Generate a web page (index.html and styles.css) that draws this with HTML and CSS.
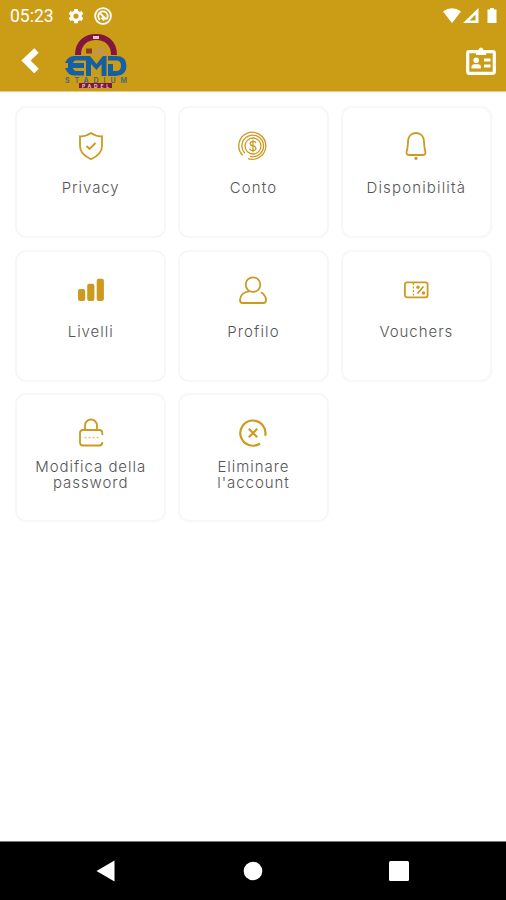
FILE: index.html
```html
<!DOCTYPE html>
<html lang="it">
<head>
    <meta charset="UTF-8">
    <meta name="viewport" content="width=device-width, initial-scale=1.0">
    <title>Impostazioni</title>
    <link rel="stylesheet" href="styles.css">
</head>
<body>

    <header>
        <div class="status-bar">
            <span class="time">05:23</span>
            <svg class="gear" width="18" height="18" viewBox="0 0 24 24"><path d="M19.4 13a7.500 7.500 0 0 0 0-2l2.300-1.700-2.200-3.900-2.700 1.100a8 8 0 0 0-1.900-1.100L14.500 2.500h-5l-.4 2.900a8 8 0 0 0-1.900 1.100L4.500 5.400 2.300 9.300 4.600 11a7.500 7.500 0 0 0 0 2l-2.300 1.700 2.200 3.900 2.700-1.100a8 8 0 0 0 1.900 1.100l.4 2.900h5l.4-2.900a8 8 0 0 0 1.900-1.100l2.700 1.100 2.200-3.900zM12 15.500a3.500 3.500 0 1 1 0-7 3.500 3.500 0 0 1 0 7z"/></svg>
            <svg class="dnd" width="18" height="18" viewBox="0 0 18 18"><circle cx="9" cy="9" r="7.900"/><path d="M6 12.700A4.700 4.700 0 1 1 12.600 12M5.800 6l6.500 6.400M7.500 10.500l2.800 2.800"/></svg>
            <svg class="signals" width="56" height="18" viewBox="0 0 56 18"><path d="M1 4.500Q10-2 19 4.500L10 16z"/><path fill-rule="evenodd" d="M36.500 1v15H21zM33.500 7.500v6h-6z"/><path d="M48 1h4v1.500h2.500V16h-9V2.500H48z"/></svg>
        </div>
        <div class="toolbar">
            <svg class="back" width="20" height="28" viewBox="0 0 20 28"><path d="M16.500 3.500L6 13.500l10.500 10.500"/></svg>
            <svg class="logo" width="64" height="56" viewBox="0 0 64 56">
                <path class="arch" d="M14 22C14 10 22 4 32 4s18 6 18 18"/>
                <path class="arch-mark" d="M29 4.500h6"/>
                <path class="ball" d="M29 18l3-4 6-1 5 4v5H29z"/>
                <path class="arch-mark-small" d="M22 18h6"/>
                <g class="letters">
                    <path d="M1 30q3-7 9-7h13v4.500H11L8.500 30H20v5H8.500l2.500 3h9v4.500H10q-6 0-9-7.500h3v-5z"/>
                    <path d="M22 43V23h4l6.500 8 6.500-8h3.500v20h-5V31l-5 6-5.500-6v12z"/>
                    <path fill-rule="evenodd" d="M44 23h8q10.500 0 10.500 9.700T52 43h-8V31h5v7h3q5 0 5-5.300t-5-5.200h-8z"/>
                </g>
                <text class="stadium" x="1" y="49.500" textLength="62">STADIUM</text>
                <rect class="padel-bg" x="15" y="50" width="33" height="5"/>
                <text class="padel" x="18" y="54.500" textLength="27">PADEL</text>
            </svg>
            <svg class="badge" width="30" height="28" viewBox="0 0 30 28">
                <rect class="frame" x="1.700" y="4.700" width="26.600" height="21.600" rx="1.500"/>
                <path d="M10 3h2.500q.5-2.500 2.500-2.500T17.500 3H20v5H10z"/>
                <circle cx="10.200" cy="13.200" r="2.800"/>
                <path d="M5.500 21.500v-2q0-2 3-2.300h3.400q3 .3 3 2.300v2zM18 11.500h6.500v3H18zM18 17.500h6.500v3H18z"/>
            </svg>
        </div>
    </header>

    <main>
        <a class="card" href="#">
            <svg class="icon" viewBox="0 0 30 30"><path d="M15 2q5 3.600 11 3.300V15c0 6.500-5 10.500-11 13.200C9 25.500 4 21.500 4 15V5.300Q10 5.600 15 2z"/><path d="M10.500 15l3 3 6-6"/></svg>
            <span class="label">Privacy</span>
        </a>
        <a class="card" href="#">
            <svg class="icon coin" viewBox="0 0 30 30"><path d="M4.700 24.300A13.500 13.500 0 1 1 10 27.600"/><path d="M6.800 22.300A10.800 10.800 0 1 1 12 25.400"/><circle cx="15" cy="15" r="8"/><path d="M18 12.200q-.5-1.900-3-1.900t-2.800 2.200q0 1.900 2.800 2.400t3 2.600q-.2 2.200-3 2.200t-3.200-2.200M15 8.800v12.400"/></svg>
            <span class="label wide">Conto</span>
        </a>
        <a class="card" href="#">
            <svg class="icon" viewBox="0 0 30 30"><path d="M15 2c-5 0-7.700 3.500-7.900 8L6.500 17l-.9 3.500Q5 24 8.500 24h13q3.500 0 2.900-3.500L23.500 17l-.6-7c-.2-4.500-2.900-8-7.900-8z"/><circle class="solid" cx="15" cy="27.300" r="1.600"/></svg>
            <span class="label wide">Disponibilità</span>
        </a>
        <a class="card" href="#">
            <svg class="icon bars" viewBox="0 0 30 30"><rect x="2" y="14" width="7.200" height="12" rx="2"/><rect x="11.200" y="8.700" width="7.200" height="17.300" rx="2"/><rect x="20.700" y="3.700" width="7.200" height="22.300" rx="2"/></svg>
            <span class="label">Livelli</span>
        </a>
        <a class="card" href="#">
            <svg class="icon" viewBox="0 0 30 30"><circle cx="15" cy="9.600" r="7.300"/><path d="M11.500 16.300C5.500 17 2 20.500 2 25q0 3 2.500 3h21q2.500 0 2.500-3 0-4.500-5-7.700"/></svg>
            <span class="label wide">Profilo</span>
        </a>
        <a class="card" href="#">
            <svg class="icon" viewBox="0 0 30 30"><rect x="3.900" y="7.300" width="22.700" height="15" rx="2"/><path class="perforation" d="M12.400 8v14"/><path d="M22.500 11.500l-6 7"/><circle class="solid" cx="17" cy="12.200" r="1.700"/><circle class="solid" cx="22.500" cy="18" r="1.700"/></svg>
            <span class="label">Vouchers</span>
        </a>
        <a class="card" href="#">
            <svg class="icon" viewBox="0 0 30 30"><path d="M9 12V7.500a6 6 0 0 1 12 0V12"/><path d="M26.300 17v-2q0-3-3-3H7q-3 0-3 3v9.500q0 3 3 3h16.300q3 0 3-3V24"/><path class="dots" d="M8.500 19.500h14"/></svg>
            <span class="label two-lines">Modifica della<br>password</span>
        </a>
        <a class="card" href="#">
            <svg class="icon cancel" viewBox="0 0 30 30"><path d="M27.200 17.800A12.600 12.600 0 1 0 22 25.500"/><path d="M10.800 10.800l8.400 8.400M19.200 10.800l-8.400 8.400"/></svg>
            <span class="label two-lines">Eliminare<br>l'account</span>
        </a>
    </main>

    <footer>
        <svg width="20" height="22" viewBox="0 0 20 22"><path d="M18.500.5v21L.5 11z"/></svg>
        <svg width="20" height="20" viewBox="0 0 20 20"><circle cx="10" cy="10" r="9.300"/></svg>
        <svg width="20" height="20" viewBox="0 0 20 20"><rect width="20" height="20" rx="1.500"/></svg>
    </footer>

</body>
</html>
```
FILE: styles.css
```css
* {
    box-sizing: border-box;
}

body {
    margin: 0;
    height: 900px;
    display: flex;
    flex-direction: column;
    background-color: #fff;
    font-family: Inter, sans-serif;
}

svg {
    display: block;
    flex: none;
}

/* Header */
header {
    height: 92px;
    background-color: #cb9d17;
    border-bottom: 1px solid #e3c990;
    fill: #fff;
}

.status-bar {
    display: flex;
    align-items: center;
    height: 32px;
    padding: 0 8px 0 10px;
}

.time {
    width: 57px;
    color: #fff;
    font: 400 17.5px Roboto, sans-serif;
}

.dnd {
    margin-left: 9px;
    fill: none;
    stroke: #fff;
    stroke-width: 1.8;
}

.signals {
    margin-left: auto;
}

.toolbar {
    display: flex;
    align-items: flex-start;
    padding: 0 10px 0 20px;
}

.back {
    margin-top: 15px;
    fill: none;
    stroke: #fff;
    stroke-width: 6.5;
}

.logo {
    margin: 1px 0 0 24px;
}

.badge {
    margin: 15px 0 0 auto;
}

.badge .frame {
    fill: none;
    stroke: #fff;
    stroke-width: 3.2;
}

/* Club logo */
.arch {
    fill: none;
    stroke: #80173f;
    stroke-width: 6;
}

.arch-mark {
    stroke: #e5c9c0;
    stroke-width: 3;
}

.arch-mark-small {
    stroke: #8c3a22;
    stroke-width: 5;
}

.ball {
    fill: #c89544;
}

.letters {
    fill: #1560a4;
}

.stadium {
    fill: #526a70;
    font: 700 7px Inter, sans-serif;
}

.padel-bg {
    fill: #80173f;
}

.padel {
    fill: #e5c9c0;
    font: 700 5px Inter, sans-serif;
}

/* Menu grid */
main {
    flex: 1;
    display: grid;
    grid-template-columns: repeat(3, 1fr);
    grid-template-rows: 132px 132px 129px;
    gap: 11.5px;
    padding: 14px 14px 0 15px;
}

.card {
    display: flex;
    flex-direction: column;
    align-items: center;
    padding-top: 23px;
    border: 2px solid #f7f7f7;
    border-radius: 11px;
    color: #555;
    text-decoration: none;
}

.icon {
    width: 30px;
    height: 30px;
    fill: none;
    stroke: #cd9a20;
    stroke-width: 1.8;
}

.icon .solid,
.bars {
    fill: #cd9a20;
    stroke: none;
}

.coin {
    stroke-width: 1.3;
}

.perforation {
    stroke-width: 1.2;
    stroke-dasharray: 2 1.5;
}

.dots {
    stroke-dasharray: 2 2;
    stroke-width: 1.5;
    opacity: 0.6;
}

.cancel {
    stroke-width: 2.2;
}

.label {
    height: 32px;
    margin-top: 11px;
    font-size: 15px;
    font-weight: 300;
    line-height: 32px;
    letter-spacing: 0.95px;
    text-align: center;
    white-space: nowrap;
}

.wide {
    letter-spacing: 1.15px;
}

.two-lines {
    line-height: 16px;
}

/* Android navigation bar */
footer {
    display: flex;
    align-items: center;
    justify-content: space-between;
    height: 59px;
    padding: 0 97px 0 96px;
    background-color: #000;
    border-top: 1px solid #777;
    fill: #fff;
}
```
